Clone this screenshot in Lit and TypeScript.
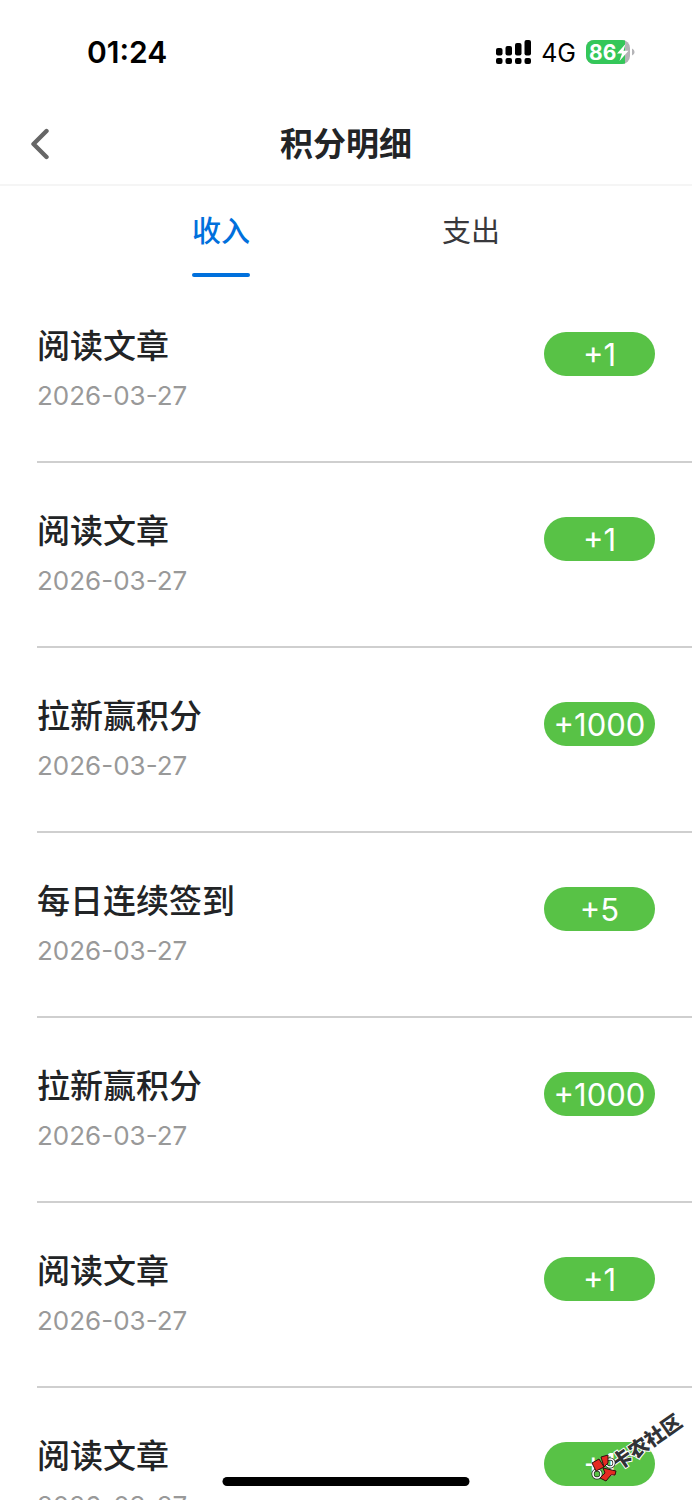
import { LitElement, html, css, svg } from "lit";
import { customElement, property, state } from "lit/decorators.js";
import { classMap } from "lit/directives/class-map.js";

interface PointRecord {
  title: string;
  date: string;
  amount: string;
}

const income: PointRecord[] = [
  { title: "阅读文章", date: "2026-03-27", amount: "+1" },
  { title: "阅读文章", date: "2026-03-27", amount: "+1" },
  { title: "拉新赢积分", date: "2026-03-27", amount: "+1000" },
  { title: "每日连续签到", date: "2026-03-27", amount: "+5" },
  { title: "拉新赢积分", date: "2026-03-27", amount: "+1000" },
  { title: "阅读文章", date: "2026-03-27", amount: "+1" },
  { title: "阅读文章", date: "2026-03-27", amount: "+1" },
];

@customElement("status-bar")
export class StatusBar extends LitElement {
  static styles = css`
    :host {
      display: flex;
      justify-content: space-between;
      align-items: center;
      height: 103px;
      padding: 0 57px 0 87px;
      box-sizing: border-box;
      color: #000;
    }
    .time {
      font-size: 30px;
      line-height: 36px;
      font-weight: 600;
    }
    .right {
      display: flex;
      align-items: center;
    }
    .signal {
      width: 35px;
      height: 24px;
      margin-right: 10px;
    }
    .net {
      font-size: 25px;
      line-height: 36px;
      margin-right: 10px;
      padding-top: 2px;
    }
    .battery {
      width: 49px;
      height: 24px;
    }
    .level {
      font: 700 21px Inter, sans-serif;
      fill: #fff;
    }
  `;

  render() {
    const bars = [8, 6, 3, 0];
    return html`
      <time class="time">01:24</time>
      <div class="right">
        <svg class="signal" viewBox="0 0 35 24" aria-hidden="true">
          ${bars.map(
            (top, i) => svg`
              <rect x=${i * 9.5} y=${top} width="6.5" height=${15.5 - top} rx="2"></rect>
              <rect x=${i * 9.5} y="18" width="6.5" height="6" rx="2"></rect>`
          )}
        </svg>
        <span class="net">4G</span>
        <svg class="battery" viewBox="0 0 49 24" aria-hidden="true">
          <clipPath id="shell"><rect width="44" height="24" rx="8"></rect></clipPath>
          <g clip-path="url(#shell)">
            <rect width="44" height="24" fill="#b4b4b7"></rect>
            <rect width="39" height="24" fill="#34c759"></rect>
          </g>
          <path d="M46 8.5 Q48.6 9.5 48.6 12 Q48.6 14.5 46 15.5Z" fill="#b4b4b7"></path>
          <text class="level" x="3" y="20">86</text>
          <path d="M39.5 4 L31 13.5 H36 L33.5 21 L42.5 10.8 H37.5Z" fill="#fff"></path>
        </svg>
      </div>
    `;
  }
}

@customElement("record-item")
export class RecordItem extends LitElement {
  @property({ attribute: false }) record!: PointRecord;

  static styles = css`
    :host {
      display: flex;
      justify-content: space-between;
      align-items: flex-start;
      height: 185px;
      box-sizing: border-box;
      padding: 46px 37px 0 0;
      border-bottom: 2px solid #cfcfcf;
    }
    .title {
      font-size: 33px;
      line-height: 44px;
      font-weight: 500;
      color: #222426;
    }
    .date {
      display: block;
      margin-top: 12px;
      font-size: 26px;
      line-height: 32px;
      color: #999;
    }
    .amount {
      width: 111px;
      height: 44px;
      margin-top: 8px;
      border-radius: 24px;
      background: #58c246;
      color: #fff;
      font-size: 31px;
      line-height: 46px;
      text-align: center;
    }
  `;

  render() {
    return html`
      <div>
        <div class="title">${this.record.title}</div>
        <time class="date">${this.record.date}</time>
      </div>
      <div class="amount">${this.record.amount}</div>
    `;
  }
}

@customElement("app-root")
export class AppRoot extends LitElement {
  @state() private tab = "收入";

  static styles = css`
    :host {
      display: block;
      position: relative;
      height: 100vh;
      overflow: hidden;
      background: #fff;
      font-family: Inter, "Noto Sans CJK SC", sans-serif;
    }
    .header {
      display: grid;
      grid-template-columns: 80px 1fr 80px;
      align-items: center;
      height: 83px;
      box-sizing: border-box;
      border-bottom: 2px solid #f5f5f5;
    }
    .back {
      display: flex;
      border: 0;
      background: none;
      padding: 0 0 0 30px;
    }
    .chevron {
      width: 20px;
      height: 32px;
    }
    .heading {
      margin: 0;
      text-align: center;
      font-size: 33px;
      line-height: 46px;
      font-weight: 600;
      color: #222426;
    }
    .tabs {
      display: flex;
      justify-content: center;
      padding: 0 96px;
      height: 91px;
      margin-bottom: 1px;
    }
    .cell {
      flex: 1;
      display: flex;
      justify-content: center;
    }
    .tab {
      box-sizing: border-box;
      border: 0;
      background: none;
      padding: 24px 0 0;
      display: flex;
      flex-direction: column;
      align-items: center;
      justify-content: space-between;
      font-family: inherit;
      font-size: 29px;
      line-height: 44px;
      color: #38383c;
    }
    .tab::after {
      content: "";
      width: 100%;
      height: 4px;
      border-radius: 2px;
    }
    .active {
      color: #0070dc;
      font-weight: 500;
    }
    .active::after {
      background: #0070dc;
    }
    .list {
      padding-left: 37px;
    }
    .home {
      position: absolute;
      left: 50%;
      bottom: 14px;
      width: 247px;
      height: 9px;
      border-radius: 5px;
      background: #000;
      transform: translateX(-50%);
    }
    .mark {
      position: absolute;
      right: 0;
      bottom: 0;
      width: 112px;
      height: 100px;
    }
    .brand {
      font: 900 20px "Noto Sans CJK SC", sans-serif;
      fill: #303236;
      stroke: #fff;
      stroke-width: 2px;
      paint-order: stroke;
    }
  `;

  private renderTab(name: string) {
    return html`<div class="cell">
      <button
        class=${classMap({ tab: true, active: this.tab === name })}
        role="tab"
        aria-selected=${this.tab === name}
        @click=${() => (this.tab = name)}
      >${name}</button>
    </div>`;
  }

  render() {
    return html`
      <status-bar></status-bar>
      <header class="header">
        <button class="back" aria-label="返回">
          <svg class="chevron" viewBox="0 0 20 32">
            <path d="M16.5 3 L3.5 16 L16.5 29" fill="none" stroke="#666" stroke-width="4.4" stroke-linecap="round" stroke-linejoin="round"></path>
          </svg>
        </button>
        <h1 class="heading">积分明细</h1>
      </header>
      <nav class="tabs" role="tablist">${this.renderTab("收入")}${this.renderTab("支出")}</nav>
      <main class="list">
        ${this.tab === "收入" ? income.map((r) => html`<record-item .record=${r}></record-item>`) : null}
      </main>
      <div class="home"></div>
      <svg class="mark" viewBox="0 0 112 100">
        <text class="brand" transform="translate(38 71) rotate(-35)">卡农社区</text>
        <g stroke="#222" stroke-width="3" fill="none">
          <circle cx="30" cy="63" r="4"></circle>
          <circle cx="17" cy="74" r="4"></circle>
        </g>
        <g stroke="#fff" stroke-width="1.6" fill="none">
          <circle cx="30" cy="63" r="4"></circle>
          <circle cx="17" cy="74" r="4"></circle>
        </g>
        <g fill="#e52a22" stroke="#301010" stroke-width="1">
          <path d="M12 63 L19 59 L24 67 L16 71Z"></path>
          <path d="M21 57 L28 55 L28 63 L24 67Z"></path>
          <path d="M23 68 L36 71 L35 75 L31 75 L26 81 L20 78 L25 73Z"></path>
        </g>
      </svg>
    `;
  }
}
